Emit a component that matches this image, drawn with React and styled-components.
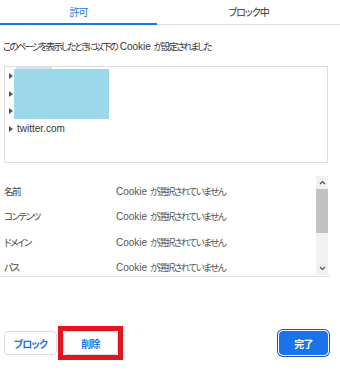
import React from "react";
import styled, { createGlobalStyle } from "styled-components";

const Global = createGlobalStyle`
  html, body {
    margin: 0;
    padding: 0;
    background: #fff;
  }
  body {
    font-family: "Liberation Sans", "Noto Sans CJK JP", sans-serif;
    font-size: 9.5px;
    letter-spacing: -1.5px;
    color: #333;
    font-feature-settings: "palt";
  }
`;

// Latin runs keep their natural spacing; only the Japanese text is tightened
const Lat = styled.span`
  font-size: 10px;
  letter-spacing: 0;
  white-space: pre;
`;

const Dialog = styled.div`
  width: 340px;
  height: 371px;
  display: flex;
  flex-direction: column;
`;

const Tabs = styled.div`
  display: flex;
  height: 25px;
  border-bottom: 1px solid #e0e0e0;
  box-sizing: border-box;
`;

const Tab = styled.div`
  flex: ${p => (p.active ? "0 0 157px" : "1")};
  display: flex;
  align-items: center;
  justify-content: center;
  padding-bottom: 1px;
  font-size: 10px;
  letter-spacing: -1px;
  color: ${p => (p.active ? "#1a73e8" : "#333")};
  border-bottom: ${p => (p.active ? "2px solid #1a73e8" : "none")};
  margin-bottom: ${p => (p.active ? "-1px" : "0")};
`;

const Intro = styled.div`
  padding: 15px 3px 0;
  height: 26px;
  line-height: 14px;
  letter-spacing: -1.9px;
`;

const TreeBox = styled.div`
  position: relative;
  margin-left: 4px;
  width: 324px;
  height: 97px;
  border: 1px solid #dcdcdc;
  box-sizing: border-box;
`;

const TreeRow = styled.div`
  display: flex;
  align-items: center;
  height: 17.7px;
  padding-left: 4px;
  gap: 4px;
`;

const Arrow = styled.span`
  width: 0;
  height: 0;
  border-top: 3px solid transparent;
  border-bottom: 3px solid transparent;
  border-left: 4px solid #555;
`;

const Redact = styled.div`
  position: absolute;
  left: 9px;
  top: 2px;
  width: 95px;
  height: 50px;
  background: #9ad8ea;
`;

const SelStrip = styled.div`
  position: absolute;
  left: 11px;
  top: 0;
  width: 36px;
  height: 2px;
  background: #cfe3f5;
`;

const Details = styled.div`
  display: flex;
  margin-top: 13px;
  width: 330px;
  height: 101px;
  border-bottom: 1px solid #e3e3e3;
  box-sizing: border-box;
`;

const Rows = styled.div`
  flex: 1;
  padding-top: 2px;
`;

const Row = styled.div`
  display: flex;
  align-items: center;
  height: 25.5px;
  padding-left: 4px;
`;

const Label = styled.span`
  width: 112px;
  color: #444;
`;

const Value = styled.span`
  color: #555;
`;

const Scrollbar = styled.div`
  width: 12px;
  height: 99px;
  margin-right: 2px;
  background: #f1f1f1;
  display: flex;
  flex-direction: column;
  align-items: center;
`;

const ScrollBtn = styled.div`
  height: 13px;
  display: flex;
  align-items: center;
  justify-content: center;
`;

const Thumb = styled.div`
  width: 12px;
  height: 44px;
  background: #c1c1c1;
`;

const Track = styled.div`
  flex: 1;
`;

const Footer = styled.div`
  margin-top: auto;
  display: flex;
  align-items: center;
  padding: 0 12px 11px 4px;
`;

const Button = styled.button`
  font-family: inherit;
  font-feature-settings: "palt";
  font-size: 10px;
  letter-spacing: -0.8px;
  font-weight: bold;
  height: 24px;
  width: ${p => p.w}px;
  border-radius: 4px;
  border: 1px solid ${p => (p.primary ? "#1a73e8" : "#dadce0")};
  background: ${p => (p.primary ? "#1a73e8" : "#fff")};
  color: ${p => (p.primary ? "#fff" : "#1a73e8")};
  box-shadow: ${p => (p.primary ? "0 0 0 1px #fff, 0 0 0 2px #1557b0" : "none")};
  padding: 0;
`;

const Highlight = styled.div`
  border: 5px solid #e3161f;
  margin-left: 1px;
  display: flex;
`;

const Spacer = styled.div`
  flex: 1;
`;

const Chevron = ({ up }) => (
  <svg width="7" height="5" viewBox="0 0 7 5">
    <path
      d={up ? "M1 4 L3.5 1.5 L6 4" : "M1 1 L3.5 3.5 L6 1"}
      fill="none"
      stroke="#505050"
      strokeWidth="1.2"
    />
  </svg>
);

const fields = ["名前", "コンテンツ", "ドメイン", "パス"];

export default function App() {
  return (
    <Dialog>
      <Global />
      <Tabs>
        <Tab active>許可</Tab>
        <Tab>ブロック中</Tab>
      </Tabs>
      <Intro>
        このページを表示したときに以下の<Lat> Cookie </Lat>が設定されました
      </Intro>
      <TreeBox>
        <TreeRow>
          <Arrow />
        </TreeRow>
        <TreeRow>
          <Arrow />
        </TreeRow>
        <TreeRow>
          <Arrow />
        </TreeRow>
        <TreeRow>
          <Arrow />
          <Lat>twitter.com</Lat>
        </TreeRow>
        <SelStrip />
        <Redact />
      </TreeBox>
      <Details>
        <Rows>
          {fields.map(f => (
            <Row key={f}>
              <Label>{f}</Label>
              <Value>
                <Lat>Cookie </Lat>が選択されていません
              </Value>
            </Row>
          ))}
        </Rows>
        <Scrollbar>
          <ScrollBtn>
            <Chevron up />
          </ScrollBtn>
          <Thumb />
          <Track />
          <ScrollBtn>
            <Chevron />
          </ScrollBtn>
        </Scrollbar>
      </Details>
      <Footer>
        <Button w={53}>ブロック</Button>
        <Highlight>
          <Button w={55}>削除</Button>
        </Highlight>
        <Spacer />
        <Button primary w={49}>完了</Button>
      </Footer>
    </Dialog>
  );
}
